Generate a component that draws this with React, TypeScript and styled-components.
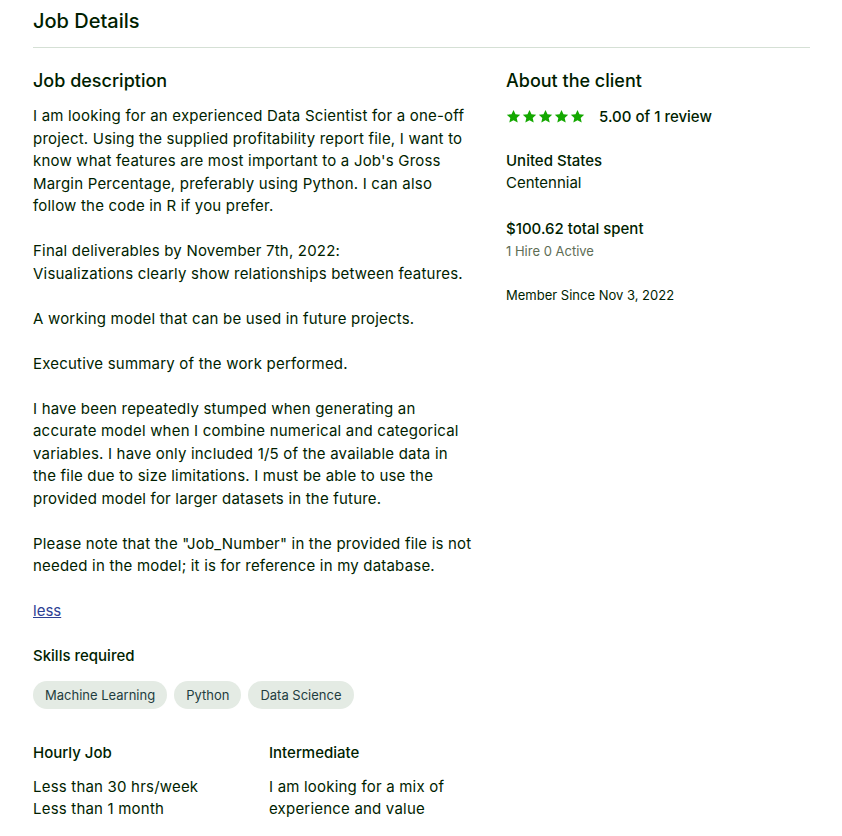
import styled, { createGlobalStyle } from "styled-components";

const GlobalStyle = createGlobalStyle`
  body {
    margin: 0;
    background: #ffffff;
    color: #001e00;
    font-family: Inter, "Liberation Sans", Arial, sans-serif;
  }
`;

const Page = styled.div`
  padding: 0 32px 0 33px;
  width: 777px;
`;

const Header = styled.header`
  display: flex;
  align-items: center;
  height: 47px;
  border-bottom: 1px solid #d5e0d5;
`;

const Title = styled.h2`
  margin: 0;
  font-size: 20px;
  font-weight: 500;
  padding-bottom: 6px;
`;

const Columns = styled.div`
  display: grid;
  grid-template-columns: 440px 304px;
  column-gap: 33px;
  padding-top: 21px;
`;

const SectionTitle = styled.h3`
  margin: 0 0 12px;
  font-size: 18px;
  font-weight: 450;
  line-height: 24px;
`;

const Description = styled.p`
  margin: 0;
  font-size: 15px;
  line-height: 22.5px;
  letter-spacing: 0.2px;
  white-space: pre-line;
`;

const LessLink = styled.a`
  display: inline-block;
  margin-top: 22px;
  font-size: 15px;
  line-height: 22px;
  color: #2d3f94;
  text-decoration: underline;
  cursor: pointer;
`;

const Label = styled.h4`
  margin: 0;
  font-size: 15px;
  font-weight: 500;
  line-height: 22px;
`;

const SkillsBlock = styled.div`
  margin-top: 23px;
`;

const ChipList = styled.div`
  display: flex;
  gap: 7px;
  margin-top: 14px;
`;

const Chip = styled.span`
  display: inline-flex;
  align-items: center;
  height: 28px;
  padding: 0 12px;
  border-radius: 14px;
  background: #e4ebe4;
  color: #1f3d3f;
  font-size: 13px;
`;

const Terms = styled.div`
  display: grid;
  grid-template-columns: 236px 200px;
  margin-top: 33px;
`;

const TermText = styled.p`
  margin: 12px 0 0;
  font-size: 15px;
  line-height: 22.5px;
  letter-spacing: 0.2px;
  white-space: pre-line;
`;

const Rating = styled.div`
  display: flex;
  align-items: center;
  gap: 14px;
  height: 22px;
  margin-bottom: 23px;
`;

const Stars = styled.div`
  display: flex;
  gap: 1px;
`;

const RatingText = styled.span`
  font-size: 15px;
  font-weight: 500;
`;

const InfoGroup = styled.div<{ $gap?: number }>`
  margin-bottom: ${(p) => p.$gap ?? 23}px;
`;

const InfoText = styled.div<{ $small?: boolean; $muted?: boolean }>`
  font-size: ${(p) => (p.$small ? 13 : 15)}px;
  line-height: ${(p) => (p.$small ? 22 : 22.5)}px;
  color: ${(p) => (p.$muted ? "#5e6d55" : "#001e00")};
`;

const Star = () => (
  <svg width="15" height="15" viewBox="0 0 24 24">
    <path
      fill="#14a800"
      d="M12 1.5l3.2 6.9 7.5.8-5.6 5.1 1.6 7.4L12 17.9l-6.7 3.8 1.6-7.4-5.6-5.1 7.5-.8z"
    />
  </svg>
);

const description = `I am looking for an experienced Data Scientist for a one-off project. Using the supplied profitability report file, I want to know what features are most important to a Job's Gross Margin Percentage, preferably using Python. I can also follow the code in R if you prefer.

Final deliverables by November 7th, 2022:
Visualizations clearly show relationships between features.

A working model that can be used in future projects.

Executive summary of the work performed.

I have been repeatedly stumped when generating an accurate model when I combine numerical and categorical variables. I have only included 1/5 of the available data in the file due to size limitations. I must be able to use the provided model for larger datasets in the future.

Please note that the "Job_Number" in the provided file is not needed in the model; it is for reference in my database.`;

const skills = ["Machine Learning", "Python", "Data Science"];

const App = () => (
  <>
    <GlobalStyle />
    <Page>
      <Header>
        <Title>Job Details</Title>
      </Header>
      <Columns>
        <section>
          <SectionTitle>Job description</SectionTitle>
          <Description>{description}</Description>
          <LessLink>less</LessLink>
          <SkillsBlock>
            <Label>Skills required</Label>
            <ChipList>
              {skills.map((s) => (
                <Chip key={s}>{s}</Chip>
              ))}
            </ChipList>
          </SkillsBlock>
          <Terms>
            <div>
              <Label>Hourly Job</Label>
              <TermText>{"Less than 30 hrs/week\nLess than 1 month"}</TermText>
            </div>
            <div>
              <Label>Intermediate</Label>
              <TermText>I am looking for a mix of experience and value</TermText>
            </div>
          </Terms>
        </section>
        <aside>
          <SectionTitle>About the client</SectionTitle>
          <Rating>
            <Stars>
              {[0, 1, 2, 3, 4].map((i) => (
                <Star key={i} />
              ))}
            </Stars>
            <RatingText>5.00 of 1 review</RatingText>
          </Rating>
          <InfoGroup>
            <Label>United States</Label>
            <InfoText>Centennial</InfoText>
          </InfoGroup>
          <InfoGroup $gap={22}>
            <Label>$100.62 total spent</Label>
            <InfoText $small $muted>1 Hire 0 Active</InfoText>
          </InfoGroup>
          <InfoText $small>Member Since Nov 3, 2022</InfoText>
        </aside>
      </Columns>
    </Page>
  </>
);

export default App;
